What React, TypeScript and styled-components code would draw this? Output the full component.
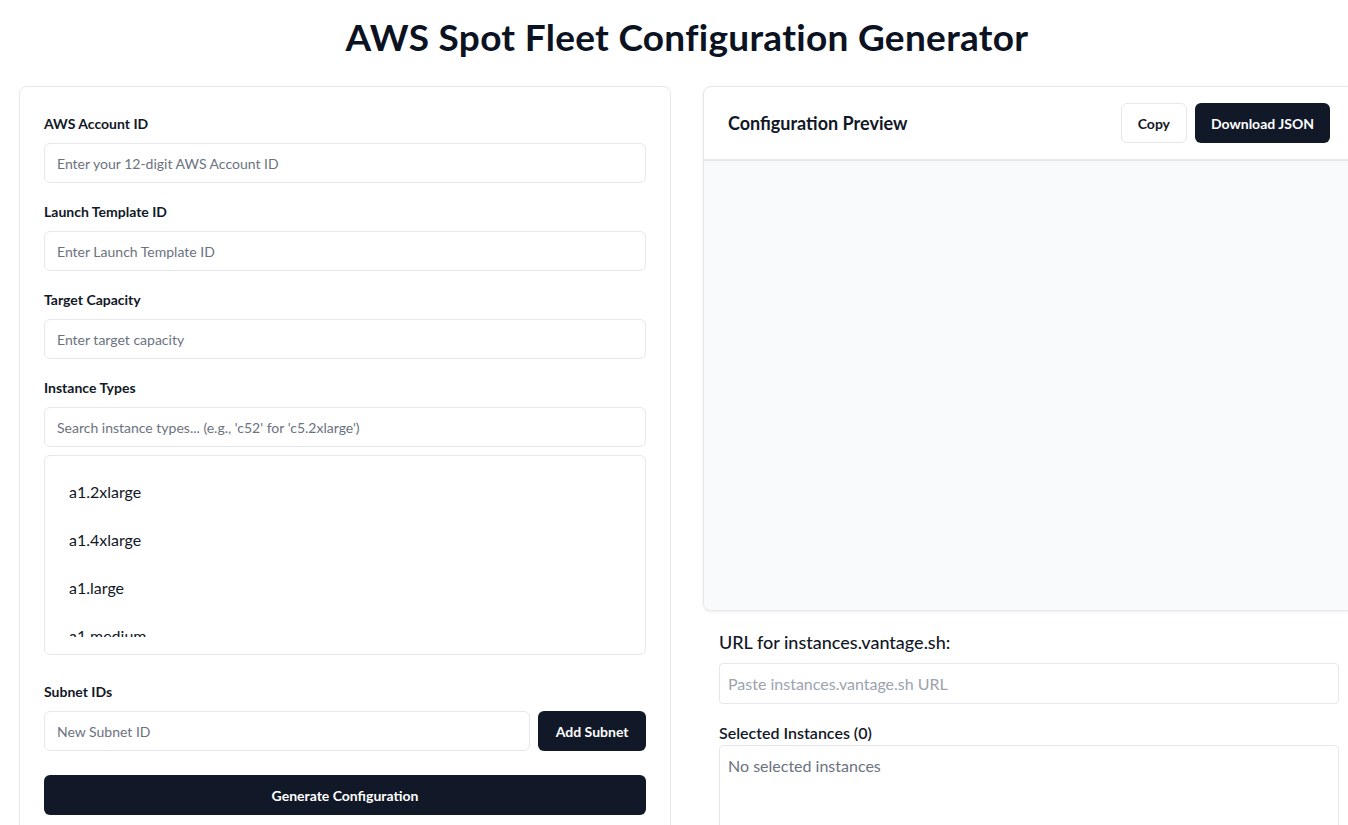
import React from "react";
import styled, { createGlobalStyle } from "styled-components";

const Global = createGlobalStyle`
  html, body { margin: 0; padding: 0; background: #ffffff; overflow-x: hidden; }
  body { font-family: Lato, "Noto Sans", sans-serif; color: #111827; }
  * { box-sizing: border-box; }
`;

const Page = styled.div`
  padding-top: 17px;
  width: 1400px;
`;

const Title = styled.h1`
  margin: 0 0 29px;
  width: 1374px;
  text-align: center;
  font-size: 37px;
  line-height: 40px;
  font-weight: 700;
  letter-spacing: 0.3px;
  color: #0b1222;
`;

const Columns = styled.div`
  display: grid;
  grid-template-columns: 652px 652px;
  column-gap: 32px;
  padding-left: 19px;
  align-items: start;
`;

const FormCard = styled.div`
  border: 1px solid #e5e7eb;
  border-radius: 8px;
  background: #ffffff;
  padding: 28px 24px 24px;
  display: flex;
  flex-direction: column;
`;

const Field = styled.div<{ $gap?: number }>`
  display: flex;
  flex-direction: column;
  margin-bottom: ${(p) => p.$gap ?? 20}px;
`;

const Label = styled.label`
  font-size: 14px;
  line-height: 18px;
  font-weight: 700;
  color: #111827;
  margin-bottom: 10px;
`;

const Input = styled.input`
  height: 40px;
  width: 100%;
  border: 1px solid #e5e7eb;
  border-radius: 6px;
  padding: 0 12px;
  font-family: inherit;
  font-size: 14px;
  color: #111827;
  background: #ffffff;
  outline: none;
  &::placeholder { color: #6b7280; }
`;

const ListBox = styled.div`
  margin-top: 8px;
  height: 200px;
  border: 1px solid #e5e7eb;
  border-radius: 6px;
  padding: 8px;
`;

const ListScroll = styled.div`
  height: 173px;
  overflow: hidden;
  padding-top: 3px;
`;

const ListItem = styled.div`
  height: 48px;
  display: flex;
  align-items: center;
  padding-left: 16px;
  font-size: 16px;
  color: #111827;
`;

const Row = styled.div`
  display: flex;
  gap: 8px;
`;

const DarkButton = styled.button<{ $full?: boolean; $pad?: number }>`
  height: 40px;
  padding: 0 ${(p) => p.$pad ?? 16}px;
  border: none;
  border-radius: 6px;
  background: #111827;
  color: #ffffff;
  font-family: inherit;
  font-size: 14px;
  font-weight: 700;
  white-space: nowrap;
  cursor: pointer;
  ${(p) => (p.$full ? "width: 100%;" : "")}
`;

const LightButton = styled.button`
  height: 40px;
  padding: 0 16px;
  border: 1px solid #e5e7eb;
  border-radius: 6px;
  background: #ffffff;
  color: #111827;
  font-family: inherit;
  font-size: 14px;
  font-weight: 700;
  cursor: pointer;
`;

const RightCol = styled.div`
  display: flex;
  flex-direction: column;
`;

const PreviewCard = styled.div`
  border: 1px solid #e5e7eb;
  border-radius: 8px;
  background: #ffffff;
  box-shadow: 0 1px 3px rgba(0, 0, 0, 0.08);
  overflow: hidden;
`;

const PreviewHeader = styled.div`
  display: flex;
  align-items: center;
  justify-content: space-between;
  padding: 16px 24px;
  border-bottom: 2px solid #e5e7eb;
`;

const PreviewTitle = styled.h2`
  margin: 0;
  font-size: 18px;
  line-height: 28px;
  font-weight: 700;
  color: #111827;
`;

const ButtonGroup = styled.div`
  display: flex;
  gap: 8px;
`;

const PreviewBody = styled.div`
  height: 449px;
  background: #f9fafb;
`;

const Section = styled.div`
  padding: 17px 16px 0;
  display: flex;
  flex-direction: column;
`;

const SectionTitle = styled.h3`
  margin: 0 0 7px;
  font-size: 18px;
  line-height: 28px;
  font-weight: 500;
  color: #111827;
`;

const UrlInput = styled.input`
  height: 41px;
  width: 100%;
  border: 1px solid #e5e7eb;
  border-radius: 4px;
  padding: 0 8px;
  font-family: inherit;
  font-size: 16px;
  outline: none;
  &::placeholder { color: #9ca3af; }
`;

const SubTitle = styled.div`
  margin-top: 17px;
  font-size: 16px;
  line-height: 24px;
  font-weight: 600;
  color: #111827;
`;

const SelectedBox = styled.div`
  height: 120px;
  border: 1px solid #e5e7eb;
  border-radius: 4px;
  padding: 6px 8px;
  font-size: 16px;
  line-height: 28px;
  color: #6b7280;
`;

const instances = ["a1.2xlarge", "a1.4xlarge", "a1.large", "a1.medium", "a1.metal", "a1.xlarge"];

export default function App() {
  return (
    <>
      <Global />
      <Page>
        <Title>AWS Spot Fleet Configuration Generator</Title>
        <Columns>
          <FormCard>
            <Field>
              <Label>AWS Account ID</Label>
              <Input placeholder="Enter your 12-digit AWS Account ID" />
            </Field>
            <Field>
              <Label>Launch Template ID</Label>
              <Input placeholder="Enter Launch Template ID" />
            </Field>
            <Field>
              <Label>Target Capacity</Label>
              <Input placeholder="Enter target capacity" />
            </Field>
            <Field $gap={28}>
              <Label>Instance Types</Label>
              <Input placeholder="Search instance types... (e.g., 'c52' for 'c5.2xlarge')" />
              <ListBox>
                <ListScroll>
                  {instances.map((i) => (
                    <ListItem key={i}>{i}</ListItem>
                  ))}
                </ListScroll>
              </ListBox>
            </Field>
            <Field $gap={24}>
              <Label>Subnet IDs</Label>
              <Row>
                <Input placeholder="New Subnet ID" />
                <DarkButton $pad={17.5}>Add Subnet</DarkButton>
              </Row>
            </Field>
            <DarkButton $full>Generate Configuration</DarkButton>
          </FormCard>
          <RightCol>
            <PreviewCard>
              <PreviewHeader>
                <PreviewTitle>Configuration Preview</PreviewTitle>
                <ButtonGroup>
                  <LightButton>Copy</LightButton>
                  <DarkButton>Download JSON</DarkButton>
                </ButtonGroup>
              </PreviewHeader>
              <PreviewBody />
            </PreviewCard>
            <Section>
              <SectionTitle>URL for instances.vantage.sh:</SectionTitle>
              <UrlInput placeholder="Paste instances.vantage.sh URL" />
              <SubTitle>Selected Instances (0)</SubTitle>
              <SelectedBox>No selected instances</SelectedBox>
            </Section>
          </RightCol>
        </Columns>
      </Page>
    </>
  );
}
